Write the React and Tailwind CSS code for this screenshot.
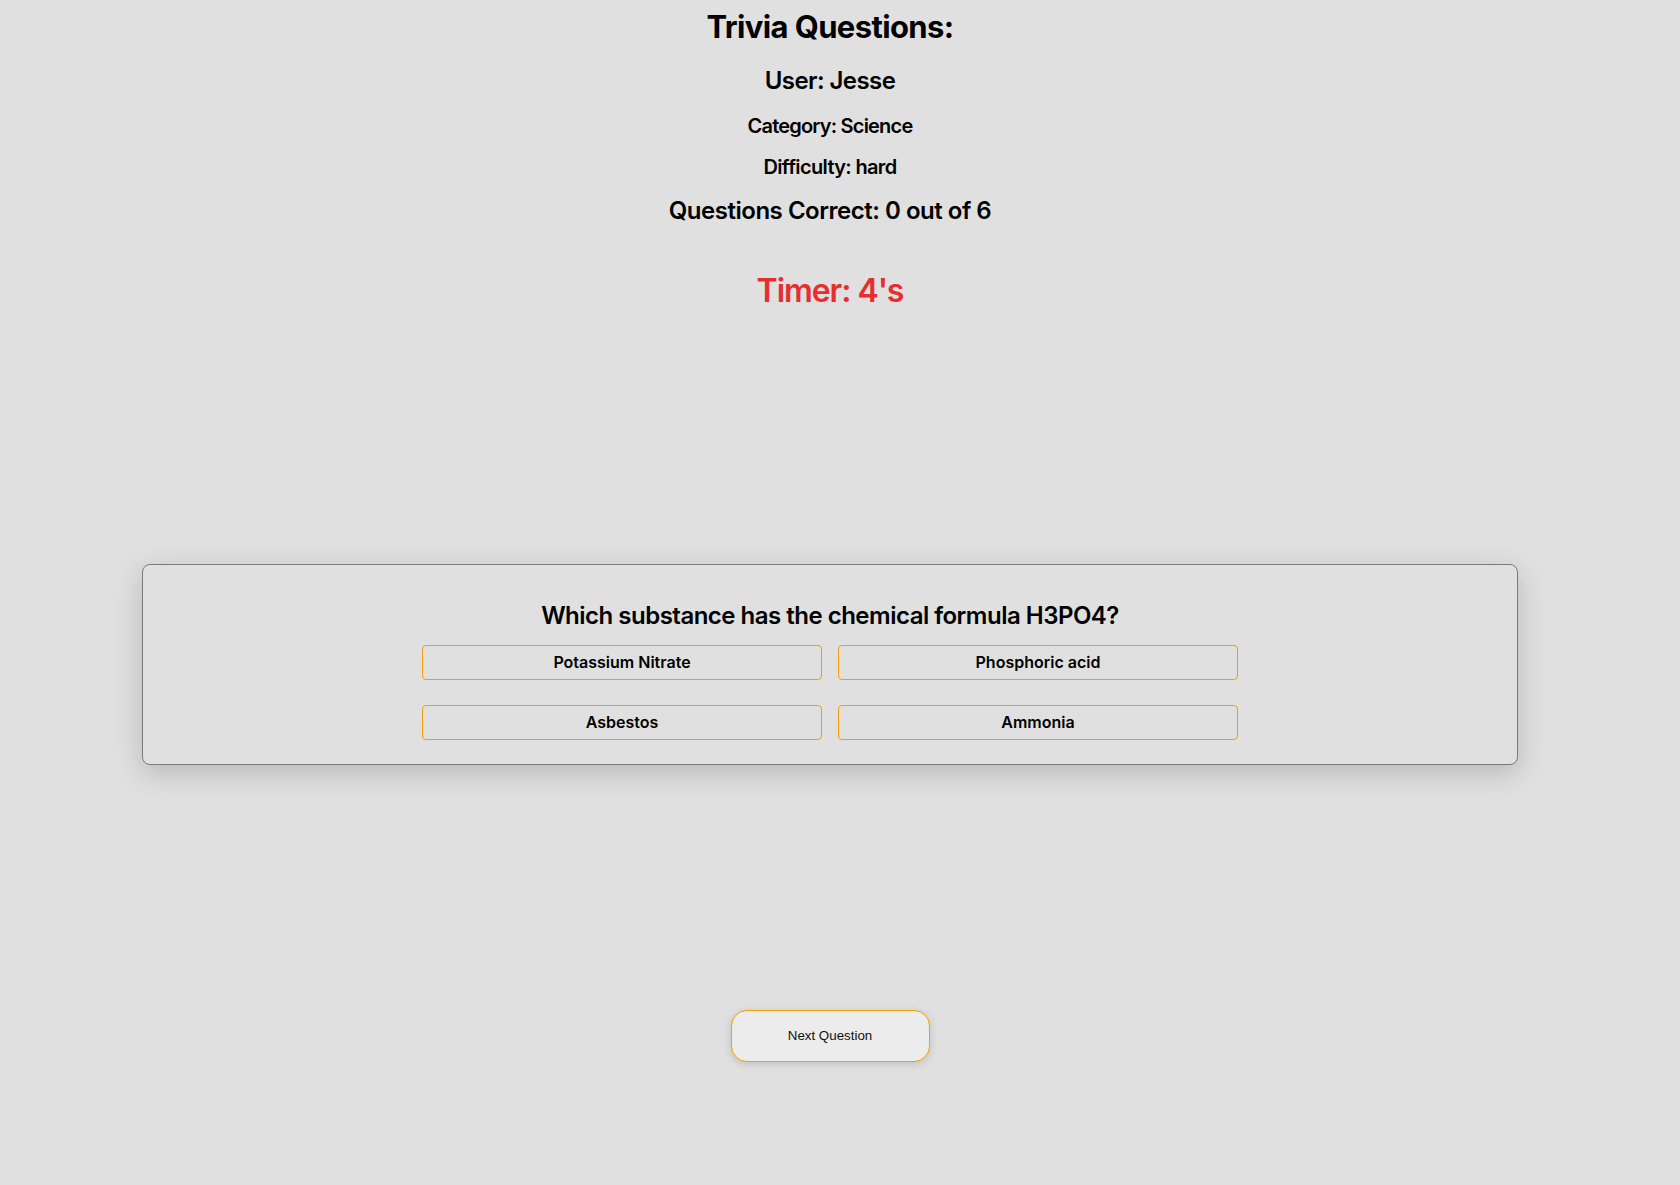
import React, { useState } from "react";

const answers = ["Potassium Nitrate", "Phosphoric acid", "Asbestos", "Ammonia"];

const App = () => {
  const [picked, setPicked] = useState(null);

  return (
    <div
      className="min-h-[1185px] w-full bg-[#e0e0e0] text-black"
      style={{ fontFamily: "Inter, 'Noto Sans', sans-serif" }}
    >
      <div className="w-[1660px] flex flex-col items-center text-center">
        <h1 className="mt-[8px] text-[31px] leading-[1.21] font-bold tracking-[-0.02em]">Trivia Questions:</h1>
        <h2 className="mt-[20px] text-[24px] leading-[1.21] font-semibold tracking-[-0.024em]">User: Jesse</h2>
        <h3 className="mt-[19px] text-[20px] leading-[1.21] font-semibold tracking-[-0.04em]">Category: Science</h3>
        <h3 className="mt-[17px] text-[20px] leading-[1.21] font-semibold tracking-[-0.033em]">Difficulty: hard</h3>
        <h2 className="mt-[17px] text-[24px] leading-[1.21] font-semibold tracking-[-0.02em]">Questions Correct: 0 out of 6</h2>
        <h1 className="mt-[47px] text-[32px] leading-[1.21] font-semibold tracking-[-0.033em] text-[#e62e2e]">Timer: 4's</h1>

        {/* question card */}
        <div className="mt-[253px] w-[1376px] border border-[#7a7a7a] rounded-[8px] bg-[#e0e0e0] pt-[36px] pb-[24px] flex flex-col items-center shadow-[0_8px_28px_rgba(0,0,0,0.18)]">
          <h2 className="text-[24px] leading-[1.21] font-semibold tracking-[-0.021em]">
            Which substance has the chemical formula H3PO4?
          </h2>
          <div className="mt-[15px] w-[816px] grid grid-cols-2 gap-x-4 gap-y-[25px]">
            {answers.map((a) => (
              <button
                key={a}
                onClick={() => setPicked(a)}
                className="h-[35px] border border-[#f59e0b] rounded-[4px] bg-[#e0e0e0] text-[16px] font-semibold"
              >
                {a}
              </button>
            ))}
          </div>
        </div>

        <button
          className="mt-[245px] w-[199px] h-[52px] rounded-[16px] border border-[#f5a000] bg-[#ececec] text-[13.33px] text-[#111] shadow-[0_2px_8px_rgba(0,0,0,0.15)]"
          style={{ fontFamily: "'Liberation Sans', Arial, sans-serif" }}
        >
          Next Question
        </button>
      </div>
    </div>
  );
};

export default App;
